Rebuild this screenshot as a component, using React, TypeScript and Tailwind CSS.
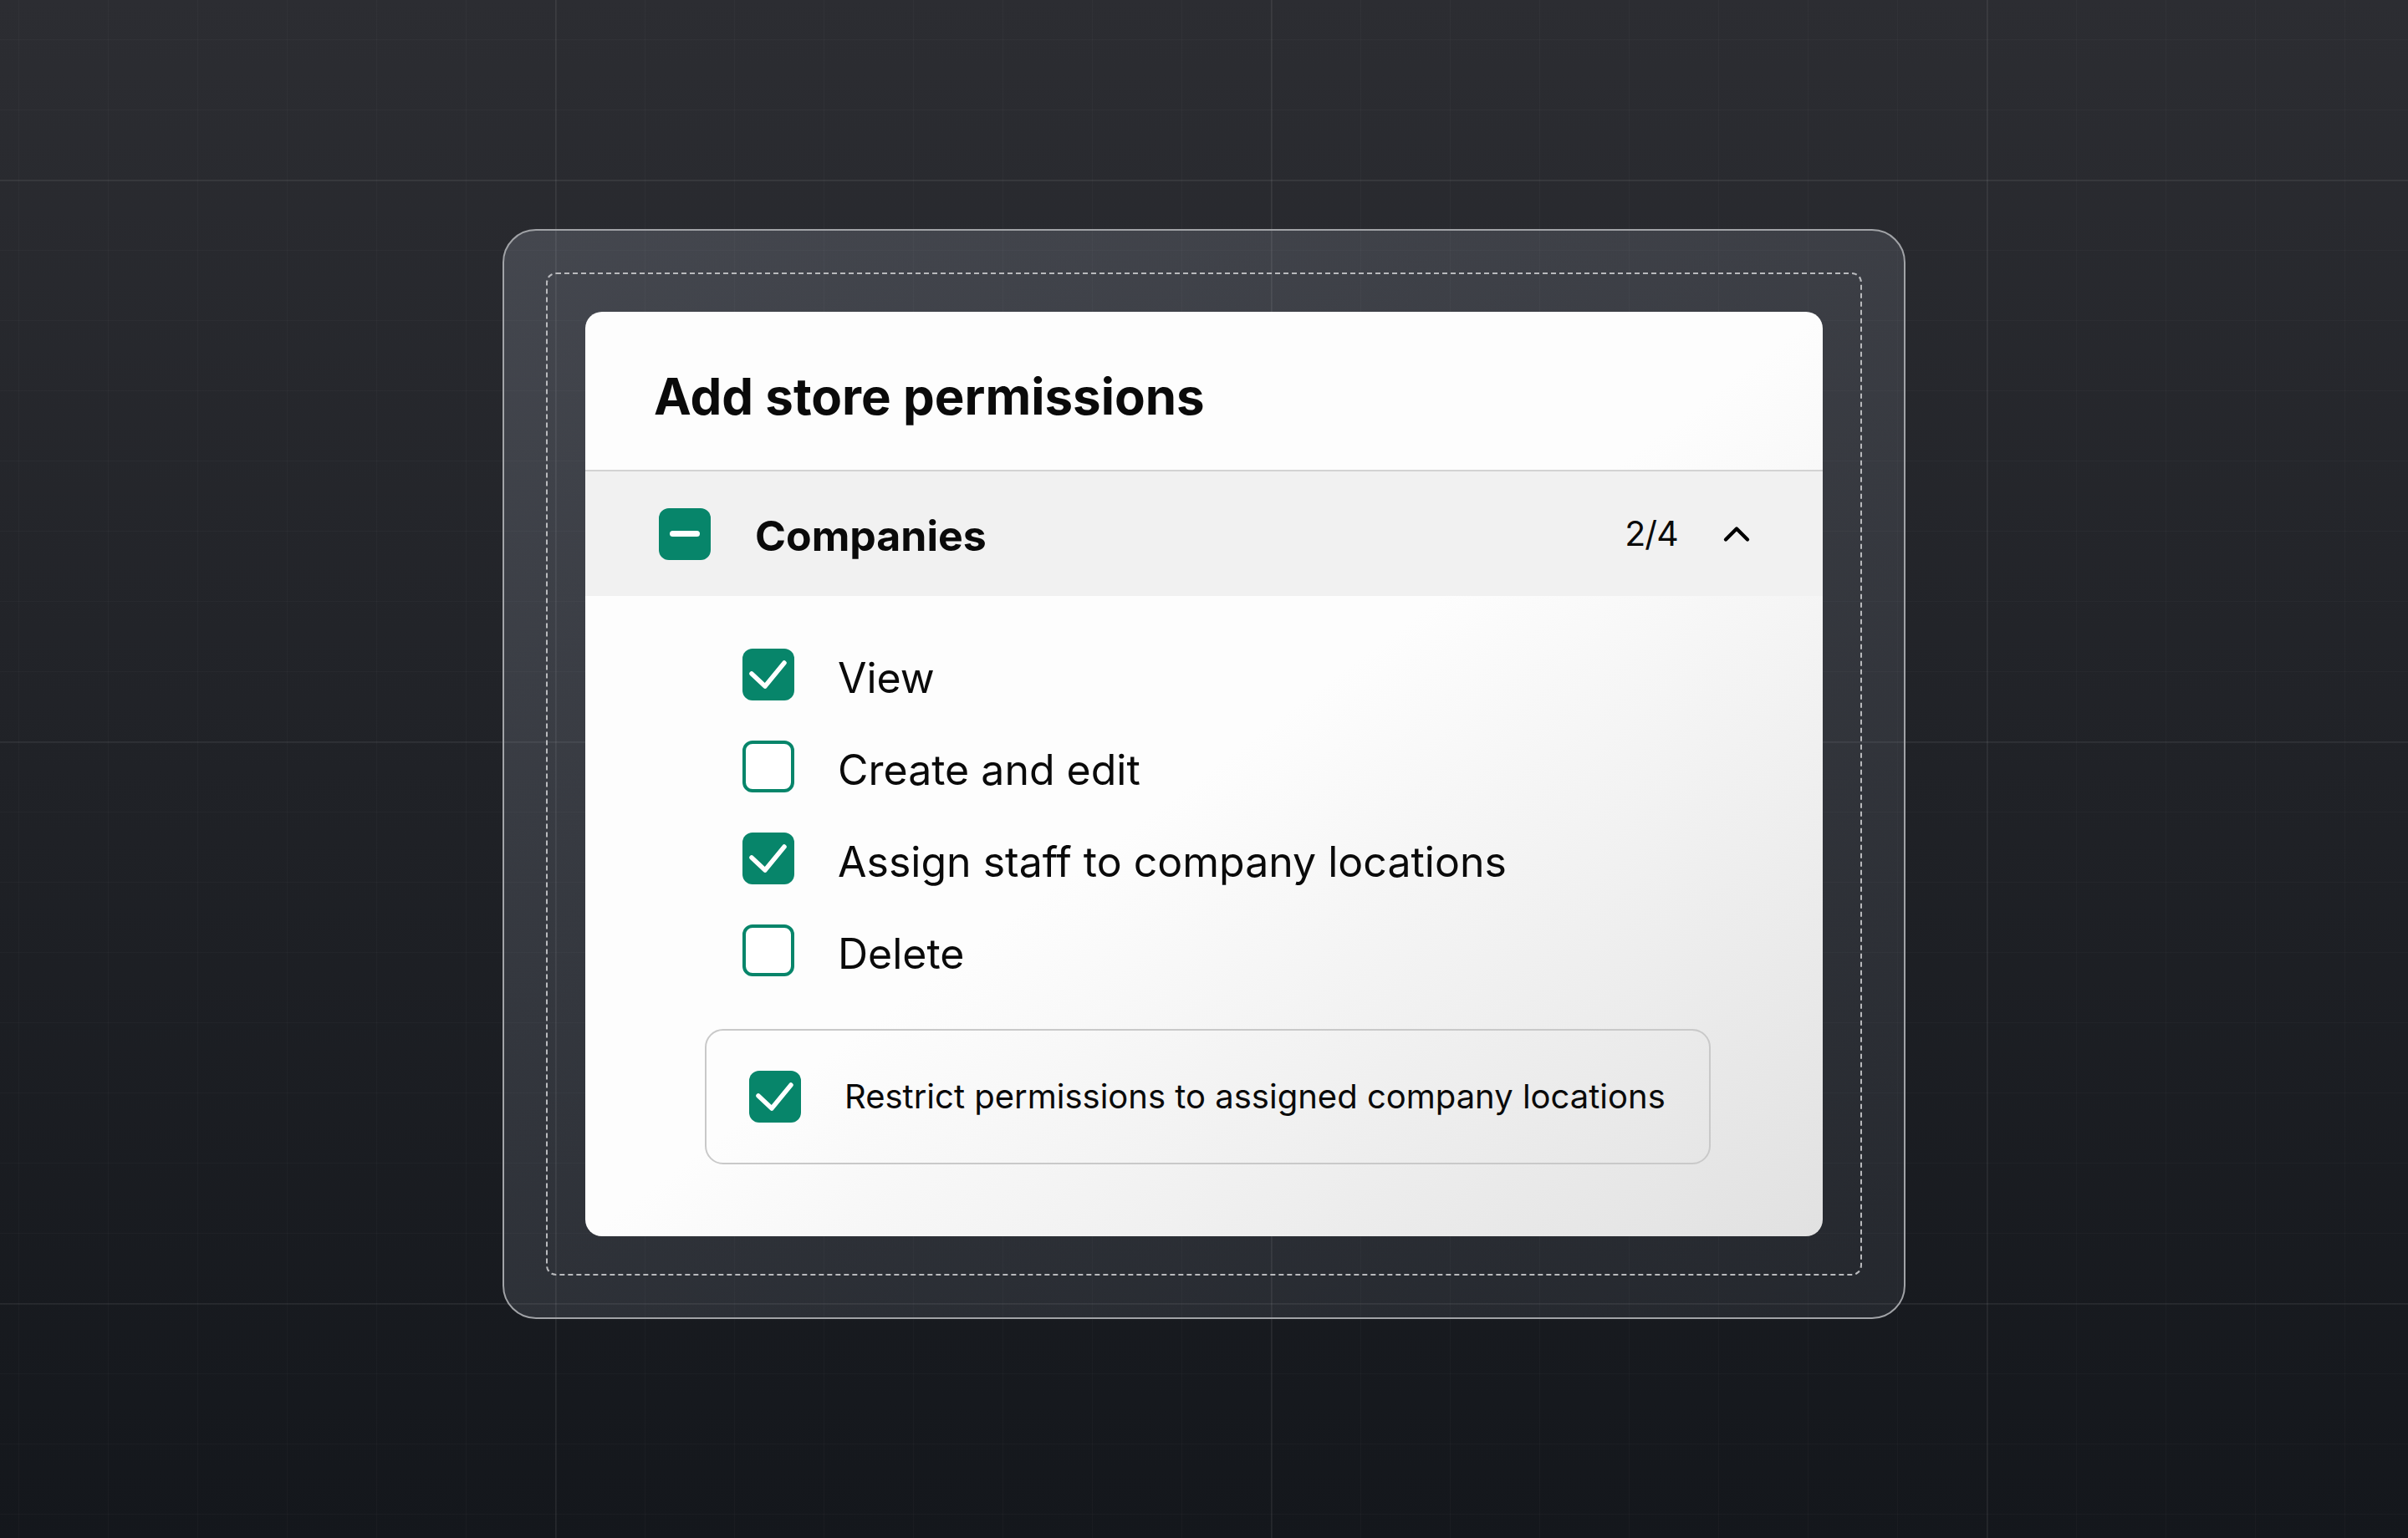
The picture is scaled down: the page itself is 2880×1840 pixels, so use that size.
import { ChevronUp } from 'lucide-react';

type Permission = { label: string; checked: boolean };

const permissions: Permission[] = [
  { label: 'View', checked: true },
  { label: 'Create and edit', checked: false },
  { label: 'Assign staff to company locations', checked: true },
  { label: 'Delete', checked: false },
];

function CheckBox({ checked }: { checked: boolean }) {
  if (!checked) {
    return <span className="block w-[62px] h-[62px] shrink-0 rounded-[12px] border-4 border-[#07856a] bg-white" />;
  }
  return (
    <span className="flex w-[62px] h-[62px] shrink-0 rounded-[12px] bg-[#07856a]">
      <svg viewBox="0 0 62 62" className="w-full h-full" fill="none">
        <path
          d="M11 30 L27 45 L50 17"
          stroke="white"
          strokeWidth="5.5"
          strokeLinecap="round"
          strokeLinejoin="round"
        />
      </svg>
    </span>
  );
}

export default function App() {
  return (
    <div className="w-full h-[1840px] flex items-center justify-center pt-[12px] font-[Inter,sans-serif] [background-image:linear-gradient(to_right,rgba(255,255,255,0.05)_2px,transparent_2px),linear-gradient(to_bottom,rgba(255,255,255,0.05)_2px,transparent_2px),linear-gradient(to_right,rgba(255,255,255,0.025)_1px,transparent_1px),linear-gradient(to_bottom,rgba(255,255,255,0.025)_1px,transparent_1px),linear-gradient(to_bottom,#2c2d32,#14171c)] [background-size:856px_672px,856px_672px,107px_84px,107px_84px,100%_100%] [background-position:664px_215px,664px_215px,22px_47px,22px_47px,0_0]">
      {/* outer frame */}
      <div className="rounded-[40px] border-2 border-[#a1a3a7] p-[50px] bg-[linear-gradient(to_bottom_right,rgba(205,215,235,0.17),rgba(205,215,235,0.07))]">
        <div className="rounded-[12px] border-2 border-dashed border-[#b9babd] p-[45px]">
          <div className="w-[1480px] rounded-[20px] overflow-hidden bg-[linear-gradient(to_bottom_right,#fdfdfd_50%,#e1e1e1)] text-[#0a0a0a]">
            <div className="pl-[82px] pt-[71px] pb-[58px] border-b-2 border-[#d3d3d3]">
              <h2 className="text-[60px] leading-[60px] font-bold">Add store permissions</h2>
            </div>

            <div className="h-[149px] flex items-center pl-[88px] pr-[77px] bg-[#f1f1f1]">
              <span className="flex items-center justify-center w-[62px] h-[62px] shrink-0 rounded-[12px] bg-[#07856a]">
                <span className="block w-[36px] h-[7px] rounded-full bg-white" />
              </span>
              <span className="ml-[53px] mt-[5px] text-[50px] leading-none font-bold">Companies</span>
              <span className="ml-auto text-[41px] leading-none tracking-[-0.02em]">2/4</span>
              <ChevronUp className="ml-[44px] w-[52px] h-[52px] text-black" strokeWidth={2} />
            </div>

            <div className="flex flex-col gap-[48px] pt-[63px] pl-[188px]">
              {permissions.map((p) => (
                <div key={p.label} className="flex items-center h-[62px]">
                  <CheckBox checked={p.checked} />
                  <span className="ml-[52px] mt-[8px] text-[50px] leading-none">{p.label}</span>
                </div>
              ))}
            </div>

            <div className="pt-[63px] pb-[86px] pl-[143px]">
              <div className="w-fit flex items-center rounded-[22px] border-2 border-[#c9c9c9] pl-[51px] pr-[52px] py-[48px]">
                <CheckBox checked />
                <span className="ml-[52px] text-[40px] leading-none">
                  Restrict permissions to assigned company locations
                </span>
              </div>
            </div>
          </div>
        </div>
      </div>
    </div>
  );
}
